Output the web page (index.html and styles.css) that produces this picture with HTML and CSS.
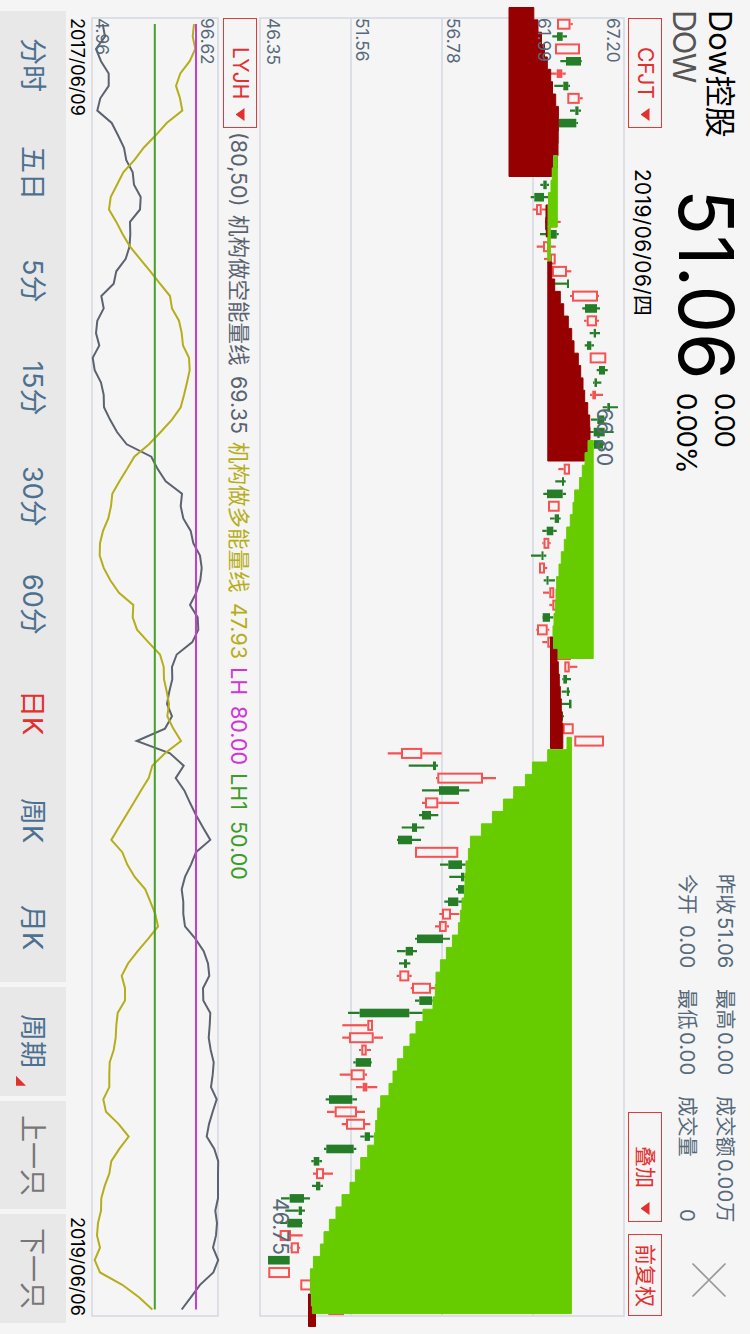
FILE: index.html
```html
<!DOCTYPE html>
<html lang="zh-CN">
<head>
  <meta charset="UTF-8" />
  <meta name="viewport" content="width=device-width, initial-scale=1.0"/>
  <title>Dow控股</title>
<link rel="stylesheet" href="styles.css">
</head>
<body>

  <div class="screen">
    <header class="header">
      <div class="name">
        <div>Dow控股</div>
        <div class="code">DOW</div>
      </div>
      <div class="price">51.06</div>
      <div class="change">
        <div>0.00</div>
        <div>0.00%</div>
      </div>
      <div class="quotes">
        <div class="quote"><span>昨收</span><span>51.06</span></div>
        <div class="quote"><span>最高</span><span>0.00</span></div>
        <div class="quote"><span>成交额</span><span>0.00万</span></div>
        <div class="quote"><span>今开</span><span>0.00</span></div>
        <div class="quote"><span>最低</span><span>0.00</span></div>
        <div class="quote"><span>成交量</span><span>0</span></div>
      </div>
      <svg class="close" width="36" height="36" viewBox="0 0 36 36">
        <path d="M1.5 1.5 L34.5 34.5 M34.5 1.5 L1.5 34.5" stroke="#999" stroke-width="1.7"/>
      </svg>
    </header>

    <div class="toolbar">
      <button class="select">CFJT<i class="arrow"></i></button>
      <span class="date">2019/06/06/四</span>
      <button class="select overlay">叠加<i class="arrow"></i></button>
      <button class="adjust">前复权</button>
    </div>

    <svg class="chart" id="kline" width="371" height="1334" viewBox="257 0 371 1334"></svg>

    <div class="legend">
      <button class="select">LYJH<i class="arrow"></i></button>
      <span class="short params">(80,50)</span>
      <span class="short">机构做空能量线 <b>69.35</b></span>
      <span class="long">机构做多能量线 <b>47.93</b></span>
      <span class="lh">LH <b>80.00</b></span>
      <span class="lh1">LH1 <b>50.00</b></span>
    </div>

    <svg class="chart" id="energy" width="131" height="1334" viewBox="91 0 131 1334"></svg>

    <div class="range">
      <span>2017/06/09</span>
      <span>2019/06/06</span>
    </div>

    <nav class="nav">
      <div class="tabs">
        <a>分时</a>
        <a>五日</a>
        <a>5分</a>
        <a>15分</a>
        <a>30分</a>
        <a>60分</a>
        <a class="active">日K</a>
        <a>周K</a>
        <a>月K</a>
      </div>
      <a class="tab period">周期<i class="corner"></i></a>
      <a class="tab step">上一只</a>
      <a class="tab step">下一只</a>
    </nav>
  </div>

  <script>
    const START = 24.1;
    const PITCH = 12.36;
    const RED = '#f65252';
    const GREEN = '#267d28';
    const GRID = '#d6dbe3';

    // type, low, body from, body to, high (f = filled red)
    const candles = [
      ['r', 557, 557, 570.5, 572.7], ['g', 552.3, 557, 562.7, 567], ['r', 555, 555, 580, 580],
      ['g', 560.3, 566, 581, 581.7], ['f', 550.7, 556.7, 562.3, 565.7], ['g', 554.3, 563.3, 568.3, 570],
      ['r', 567.3, 567.3, 579.7, 582.7], ['g', 570, 575.3, 578.5, 581], ['g', 559, 559, 576.3, 578],
      null, null, null, null,
      ['g', 540.3, 543.3, 546.7, 549], ['g', 530.7, 534.3, 544, 548], ['r', 532.7, 536, 541.7, 546],
      ['r', 545, 551, 557, 560.7], ['g', 540, 550, 556.7, 558.7], ['r', 536.7, 543, 549, 555.7],
      ['r', 544, 550, 555.7, 555.7], ['r', 552, 552, 567, 571.3], ['g', 555, 567, 569, 569],
      ['r', 570, 572, 598, 599], ['g', 582.3, 585, 597, 600], ['r', 584, 586.7, 597, 599],
      ['g', 589.7, 593.7, 596, 600], ['g', 584.7, 587, 591.3, 594], ['r', 589.7, 589.7, 606.3, 606.3],
      ['g', 596.7, 599, 605, 607.7], ['g', 593, 594.5, 597, 601.3], ['f', 590, 592.3, 596, 603],
      ['g', 602.7, 607.3, 610, 618], ['g', 591, 597.3, 604.3, 606], ['g', 590, 593.7, 604.7, 613.7],
      ['g', 592, 593.7, 603, 604], null, ['r', 558.3, 563.7, 570, 570],
      ['g', 555.3, 562, 564, 565.7], ['g', 543.3, 547, 562.7, 566], ['r', 548, 548, 559.7, 559.7],
      ['g', 550, 554.7, 559, 560.7], ['g', 542.3, 546.7, 553.3, 556.7], ['r', 542.3, 543.5, 549.3, 550.7],
      ['g', 531, 541.5, 543.5, 546.3], ['r', 539, 539, 545, 547.3], ['g', 543.7, 546.5, 548.5, 555],
      ['r', 543, 549.3, 554.3, 554.3], ['r', 549.3, 552.3, 558, 558], ['g', 542.3, 542.7, 550, 553.3],
      ['r', 536.3, 537, 547.7, 549.3], ['r', 542.3, 547.3, 553, 553], ['r', 557, 557, 571, 571],
      ['r', 564.3, 564.3, 569.7, 577.3], ['g', 562.3, 563.3, 567, 571], ['g', 561.7, 566.8, 569, 570],
      ['g', 561.7, 569, 571.5, 571.5], ['g', 560, 561, 563, 564], ['r', 562.7, 562.7, 573.7, 573.7],
      ['r', 574.3, 574.3, 604, 604], ['r', 387.7, 401, 422.3, 441.7], ['g', 408.7, 433, 436, 438],
      ['r', 436, 437.3, 483, 496], ['g', 422, 439, 459, 469.3], ['r', 422, 425, 438.3, 459],
      ['g', 419, 422, 431, 438.3], ['g', 401.7, 412, 417, 424.3], ['g', 397, 398, 412, 421],
      ['r', 415, 415, 458.3, 458.3], ['g', 440, 448.3, 462, 465.7], ['g', 449.3, 461, 464.3, 465],
      ['g', 456, 458, 464, 464], ['g', 444.3, 448, 458.3, 462], ['r', 439.3, 442, 451, 459.3],
      ['r', 435, 439, 446.7, 449], ['g', 415, 417, 443, 450], ['g', 397, 405.7, 413, 417],
      ['g', 399, 404, 407, 410.3], ['r', 396.7, 399.3, 409.3, 411.7], ['r', 410.7, 412, 431, 435],
      ['g', 415, 419.3, 432, 432.7], ['g', 348, 359.7, 409.3, 422.7], ['r', 342.3, 367.3, 373, 373],
      ['r', 342.3, 349, 373.7, 383], ['r', 359, 361.3, 366.7, 371], ['g', 353.3, 355.7, 371, 371.7],
      ['r', 339.7, 350.7, 364.7, 367], ['f', 356, 362.7, 367.3, 377.3], ['g', 325.7, 329, 352.3, 357],
      ['r', 327, 334.7, 357, 365], ['r', 341.7, 346, 365, 370.3], ['g', 360.3, 364.7, 370, 373.7],
      ['g', 324, 326.3, 353.7, 356.3], ['g', 311.3, 313.7, 319.3, 322], ['r', 313, 316, 324, 333],
      ['g', 312, 316, 320.3, 323], ['g', 281, 289.7, 304, 310], ['g', 285.3, 298.7, 302, 305],
      ['g', 280, 287.3, 302, 302.7], ['r', 278.3, 279.7, 291, 302.7], ['r', 290, 290.7, 299, 300],
      ['g', 268, 268, 289.7, 289.7], ['r', 268.3, 268.3, 290, 290], ['r', 300.3, 300.3, 312, 312],
      null, ['r', 328.3, 328.3, 344, 344]
    ];

    // stepped cost areas: base line, start, end and the edge for each step
    const areas = [
      { color: '#960000', base: 509, from: 7.5, to: 176.5, edges: [533.8, 538, 541.5, 544.5, 547.3, 550.7, 552.5, 555.7, 558.4, 558.4, 558.2, 558, 557.2, 551.7] },
      { color: '#960000', base: 548, from: 205, to: 237, edges: [546, 545.7, 546.3] },
      { color: '#66cc00', base: 557.3, from: 155.5, to: 227, edges: [553.5, 552.3, 551, 548.5, 548, 548] },
      { color: '#66cc00', base: 550.4, from: 226, to: 263, edges: [548, 547.7, 547.7] },
      { color: '#960000', base: 547.8, from: 262, to: 461, edges: [551.7, 554.7, 560.3, 563.7, 568.3, 571.7, 574, 578.3, 580.7, 583, 584.7, 587.7, 589.7, 590, 588, 584.5], first: 279 },
      { color: '#66cc00', base: 593.2, from: 440.5, to: 658.5, edges: [588, 585, 582.3, 579.6, 574.7, 573, 570.3, 566.7, 564.3, 561.3, 559, 556.7, 556, 555.3, 554, 553, 553, 553] },
      { color: '#960000', base: 550.5, from: 637, to: 748.5, edges: [552.5, 557, 558.3, 559.3, 560.3, 561.3, 562, 562.8, 562.8] },
      { color: '#960000', base: 308.5, from: 1294, to: 1326.5, edges: [310.5, 315.5, 315.5] },
      { color: '#66cc00', base: 571.4, from: 737.3, to: 1313.6, edges: [567, 547.7, 532.4, 525.4, 513.7, 503.4, 492.4, 481.4, 470.4, 468.4, 466, 465, 464.4, 462, 460.4, 458.4, 452.4, 446.4, 440.4, 436, 435.3, 433, 423, 416, 410, 403.7, 397.4, 393, 389, 380.7, 377.7, 375.7, 374.4, 367.7, 360.7, 355.4, 350, 342, 336, 329.4, 324, 320.4, 313.4, 310.4, 310.4, 311.4, 312.4] }
    ];

    const shortLine = [
      102.7, 105, 96, 101, 108.7, 108.7, 100.3, 97.3, 111.7, 118, 124, 126.3, 132.7, 134, 140.7,
      140, 130, 130.3, 129.5, 125.7, 116.3, 113.7, 101.3, 103.7, 97.3, 96, 99.3, 92.7, 94.7, 101,
      103.7, 104, 110, 117, 126.7, 151.3, 157.7, 165.7, 182, 180.7, 183.3, 190.7, 193.3, 200, 201.7,
      200.3, 196.3, 190, 197.7, 198.3, 192.3, 176.7, 172, 172.3, 169.3, 167, 172, 165, 136.7, 170,
      183.7, 175.7, 184.3, 190, 196, 203, 210.3, 196, 191, 185, 181.7, 183.3, 183.3, 185, 195.3,
      203.7, 208, 209.3, 203, 203.3, 210.3, 209.7, 208.7, 210.7, 213.7, 212.7, 211, 216.7, 212.7, 209,
      206.7, 214.3, 218.2, 218, 218, 218, 215.3, 217, 216, 213, 218.2, 213.3, 200, 191, 181.7
    ];

    const longLine = [
      194, 192.7, 195.3, 189.7, 180.3, 176, 180, 182.3, 166.7, 155.7, 143.7, 134.3, 123.3, 117, 110.7,
      109, 116.3, 122.7, 130, 140, 150.3, 160, 170, 172, 179, 181.7, 183, 189, 189.7, 187,
      184, 180.7, 172, 160.7, 149, 134.3, 127, 119.3, 112.3, 111, 108.3, 103, 100, 99.7, 103.7,
      110.3, 119, 133.3, 132.7, 137, 148.3, 160, 163.7, 164, 166.7, 169, 167.3, 173.3, 181, 165,
      152.3, 148.7, 141, 133.7, 126.3, 118.7, 111.3, 122.3, 127.3, 134.7, 145.3, 150.3, 155.3, 158, 148.3,
      137.7, 128, 121.7, 125, 125, 117.7, 116.3, 115.7, 113.7, 109.7, 109.3, 109.3, 103.3, 106, 118.7,
      128.7, 119.3, 111.3, 109.3, 104.7, 101.3, 101, 98, 97, 100, 94.7, 100, 122.3, 139, 152.3
    ];

    function gridLine(x) {
      return `<path d="M${x} 18V1316" stroke="${GRID}" stroke-width="1.6"/>`;
    }

    function frame(x, width) {
      return `<rect x="${x}" y="18" width="${width}" height="1298" fill="none" stroke="${GRID}" stroke-width="1.6"/>`;
    }

    function label(x, y, text, cls) {
      return `<text class="${cls}" transform="translate(${x} ${y}) rotate(90)">${text}</text>`;
    }

    function candle(c, i) {
      if (!c) return '';
      const [type, low, from, to, high] = c;
      const y = START + i * PITCH;
      const color = type === 'g' ? GREEN : RED;
      let s = `<path d="M${low} ${y}H${from}M${to} ${y}H${high}" stroke="${color}" stroke-width="2.2"/>`;
      if (type === 'r') {
        s += `<rect x="${from + 1}" y="${y - 4.4}" width="${to - from - 2}" height="9" fill="none" stroke="${color}" stroke-width="2"/>`;
      } else {
        s += `<rect x="${from}" y="${y - 4.2}" width="${to - from}" height="8.6" fill="${color}"/>`;
      }
      return s;
    }

    function area(a) {
      let y = a.first || a.from + PITCH;
      let d = `M${a.base} ${a.from}`;
      a.edges.forEach((x, i) => {
        const end = i === a.edges.length - 1 ? a.to : Math.min(y, a.to);
        d += `H${x}V${end}`;
        y += PITCH;
      });
      return `<path d="${d}H${a.base}Z" fill="${a.color}" stroke="${a.color}" stroke-width="1" stroke-linejoin="round"/>`;
    }

    function line(points, color) {
      const p = points.map((x, i) => `${x},${(START + i * PITCH).toFixed(1)}`).join(' ');
      return `<polyline points="${p}" fill="none" stroke="${color}" stroke-width="2"/>`;
    }

    document.getElementById('kline').innerHTML =
      frame(260, 364) + [351, 442, 533].map(gridLine).join('') +
      candles.map(candle).join('') +
      areas.map(area).join('') +
      label(607, 18, '67.20', 'axis') + label(538, 18, '61.99', 'axis') +
      label(447, 18, '56.78', 'axis') + label(356, 18, '51.56', 'axis') +
      label(267, 18, '46.35', 'axis') +
      label(597, 408, '66.80', 'peak') + label(273, 1198, '46.75', 'peak');

    document.getElementById('energy').innerHTML =
      frame(92, 126) +
      line(shortLine, '#5c6370') + line(longLine, '#b5ae1a') +
      '<path d="M196 24V1309.5" stroke="#c83cd2" stroke-width="2"/>' +
      '<path d="M154.8 24V1309.5" stroke="#46a02c" stroke-width="2"/>' +
      label(201, 18, '96.62', 'axis') + label(96, 18, '4.96', 'axis');
  </script>
</body>
</html>
```
FILE: styles.css
```css
* {
  box-sizing: border-box;
}

body {
  margin: 0;
  background: #f5f5f5;
  font-family: Inter, 'Noto Sans CJK SC', sans-serif;
  color: #000;
}

/* the whole screen reads top to bottom, as on a phone held sideways */
.screen {
  width: 750px;
  height: 1334px;
  overflow: hidden;
  writing-mode: vertical-rl;
  text-orientation: sideways;
  white-space: nowrap;
}

.header {
  width: 88px;
  height: 1334px;
  display: flex;
  align-items: center;
  padding-top: 10px;
}

.name {
  height: 179px;
  font-size: 31px;
  line-height: 36px;
  margin-right: 8px;
}

.code {
  color: #555;
  letter-spacing: -1.7px;
}

.price {
  height: 204px;
  font-size: 75.5px;
  line-height: 84px;
}

.change {
  height: 481px;
  font-size: 27.5px;
  line-height: 38px;
  letter-spacing: -1.2px;
}

.quotes {
  display: grid;
  grid-template-columns: 94px 86px 126px;
  column-gap: 21px;
  height: 348px;
  font-size: 20.3px;
  line-height: 38px;
  color: #56697a;
}

.quote {
  display: flex;
  justify-content: space-between;
}

.close {
  margin-top: 40px;
  margin-left: 5px;
}

.chart {
  display: block;
  writing-mode: horizontal-tb;
}

.toolbar {
  width: 34px;
  height: 1334px;
  display: flex;
  padding: 18px 0;
}

button {
  width: 34px;
  margin: 0;
  padding: 0;
  border: 1.4px solid #dc3c3c;
  background: none;
  color: #e22f2f;
  font-family: inherit;
  font-size: 21px;
  line-height: 30px;
  writing-mode: vertical-rl;
  text-orientation: sideways;
}

.select {
  height: 110px;
  display: flex;
  align-items: center;
  justify-content: flex-end;
  padding-bottom: 6px;
}

.arrow {
  width: 9px;
  height: 13px;
  margin-top: 9px;
  background: #e22f2f;
  clip-path: polygon(0 50%, 100% 0, 100% 100%);
}

.overlay .arrow {
  margin-top: 14px;
}

.date {
  height: 984px;
  padding-top: 41px;
  font-size: 20.8px;
  line-height: 39px;
  letter-spacing: 0.4px;
}

.adjust {
  height: 82px;
  margin-top: 12px;
}

.legend {
  width: 35px;
  height: 1334px;
  display: flex;
  padding-top: 18px;
  font-size: 21.5px;
  line-height: 36px;
}

.legend b {
  font-weight: normal;
  margin-top: 4.8px;
}

.legend span {
  margin-top: 8px;
}

.legend .params {
  margin-top: 4px;
}

.short {
  color: #5a6270;
}

.long {
  color: #b5ae1a;
}

.lh {
  color: #cf35d8;
}

.lh1 {
  color: #3d9b2a;
}

.axis {
  font-size: 17.3px;
  fill: #56697a;
}

.peak {
  font-size: 21.4px;
  fill: #56697a;
}

.range {
  width: 25px;
  height: 1334px;
  display: flex;
  justify-content: space-between;
  padding: 18px 0;
  font-size: 18px;
  line-height: 27px;
}

.nav {
  width: 66px;
  height: 1334px;
  display: flex;
  gap: 5px;
  padding: 11px 0;
  font-size: 27px;
  line-height: 67px;
  text-align: center;
  color: #4c7190;
}

.tabs {
  height: 971px;
  display: grid;
  grid-template-columns: repeat(9, 1fr);
  background: #e8e8e8;
}

.active {
  color: #e22f2f;
}

.tab {
  flex: 1;
  position: relative;
  background: #e8e8e8;
}

.step {
  color: #777;
}

/* small marker lying over the corner of the tab */
.corner {
  position: absolute;
  left: 16px;
  bottom: 10px;
  width: 10px;
  height: 10px;
  background: #e22f2f;
  clip-path: polygon(0 0, 100% 100%, 0 100%);
}
```
